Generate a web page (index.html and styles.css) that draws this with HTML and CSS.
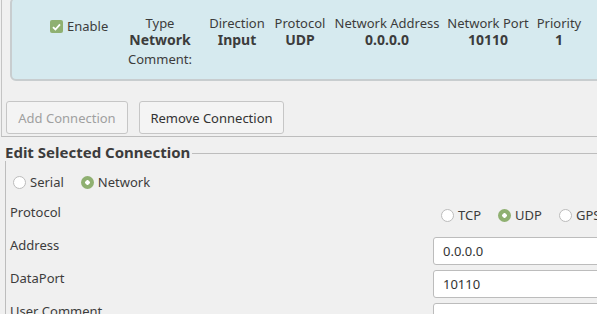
FILE: index.html
```html
<!DOCTYPE html>
<html lang="en">
<head>
    <meta charset="UTF-8">
    <title>Connections</title>
    <link rel="stylesheet" href="styles.css">
</head>
<body>

    <!-- Liste des connexions -->
    <div class="top">
        <div class="card">
            <label class="enable">
                <span class="check">
                    <svg width="9" height="8" viewBox="0 0 9 8"><path d="M1 4.2 L3.4 6.5 L8 1.3" fill="none" stroke="#fff" stroke-width="1.8"/></svg>
                </span>
                Enable
            </label>
            <div class="col col-type">
                <span>Type</span>
                <b>Network</b>
                <span class="comment">Comment:</span>
            </div>
            <div class="col col-dir"><span>Direction</span><b>Input</b></div>
            <div class="col col-proto"><span>Protocol</span><b>UDP</b></div>
            <div class="col col-addr"><span>Network Address</span><b>0.0.0.0</b></div>
            <div class="col col-port"><span>Network Port</span><b>10110</b></div>
            <div class="col col-prio"><span>Priority</span><b>1</b></div>
        </div>

        <div class="buttons">
            <button class="btn btn-add" disabled>Add Connection</button>
            <button class="btn btn-remove">Remove Connection</button>
        </div>
    </div>

    <!-- Edition de la connexion -->
    <div class="group">
        <div class="group-title">Edit Selected Connection</div>
        <div class="group-body">
            <div class="radios kind">
                <span class="radio-item"><span class="radio"></span>Serial</span>
                <span class="radio-item"><span class="radio on"></span>Network</span>
            </div>

            <div class="form">
                <div class="label">Protocol</div>
                <div class="field radios">
                    <span class="radio-item"><span class="radio"></span>TCP</span>
                    <span class="radio-item"><span class="radio on"></span>UDP</span>
                    <span class="radio-item"><span class="radio"></span>GPSD</span>
                </div>

                <div class="label">Address</div>
                <div class="field"><input class="input" type="text" value="0.0.0.0"></div>

                <div class="label">DataPort</div>
                <div class="field"><input class="input" type="text" value="10110"></div>

                <div class="label">User Comment</div>
                <div class="field"><input class="input" type="text" value=""></div>
            </div>
        </div>
    </div>

</body>
</html>
```

FILE: styles.css
```css
/* Fond et police */
body {
    font-family: 'Noto Sans', sans-serif;
    font-size: 13px;
    line-height: 17px;
    color: #3c3c3c;
    margin: 0;
    padding: 0;
    background-color: #f0f0f0;
    width: 597px;
    height: 314px;
    overflow: hidden;
}

/* Zone de la liste */
.top {
    margin-left: 1px;
    border-left: 1px solid #c4c4c4;
    border-bottom: 1px solid #bdbdbd;
    box-sizing: border-box;
    height: 140px;
}

.card {
    display: flex;
    margin: -3px 0 0 8px;
    width: 640px;
    height: 84px;
    box-sizing: border-box;
    background-color: #d6eaef;
    border: 2px solid #c8cdcf;
    border-radius: 6px;
    padding: 16px 0 0 38px;
}

.enable {
    display: flex;
    align-items: center;
    gap: 4px;
    width: 70px;
    height: 17px;
    margin-top: 3px;
}

.check {
    display: flex;
    align-items: center;
    justify-content: center;
    width: 13px;
    height: 13px;
    border-radius: 2px;
    background-color: #8fb071;
}

.col {
    display: flex;
    flex-direction: column;
    align-items: center;
    white-space: nowrap;
}

.col span {
    line-height: 16px;
}

.col b {
    font-weight: bold;
    font-size: 14px;
    line-height: 18px;
}

.col .comment {
    margin-top: 2px;
    line-height: 17px;
}

.col-type { width: 80px; }
.col-dir { width: 74px; }
.col-proto { width: 52px; }
.col-addr { width: 122px; }
.col-port { width: 80px; }
.col-prio { width: 62px; }

/* Boutons */
.buttons {
    display: flex;
    gap: 11px;
    margin: 20px 0 0 4px;
}

.btn {
    font-family: inherit;
    font-size: 13px;
    white-space: nowrap;
    height: 33px;
    padding: 0;
    background-color: #f4f4f4;
    border: 1px solid #c6c6c6;
    border-radius: 3px;
    color: #333;
}

.btn-add {
    width: 122px;
    color: #a0a0a0;
}

.btn-remove {
    width: 145px;
}

/* Groupe d'edition */
.group {
    margin: 7px 0 0 5px;
}

.group-title {
    display: flex;
    align-items: center;
    font-weight: bold;
    font-size: 15px;
}

.group-title::after {
    content: "";
    flex: 1;
    border-top: 1px solid #bdbdbd;
    margin: 1px 0 0 2px;
}

.group-body {
    border-left: 1px solid #bdbdbd;
    padding: 13px 0 0 4px;
}

.radios {
    display: flex;
    align-items: center;
}

.radio-item {
    display: flex;
    align-items: center;
    gap: 4px;
    margin-right: 17px;
}

.radio {
    width: 11px;
    height: 11px;
    border: 1px solid #bcbcbc;
    border-radius: 50%;
    background-color: #fff;
}

.radio.on {
    width: 13px;
    height: 13px;
    border: none;
    background: radial-gradient(circle, #fff 0 2px, #8fb071 2.5px);
}

.kind {
    margin-left: 3px;
    height: 17px;
}

/* Formulaire */
.form {
    display: grid;
    grid-template-columns: 423px 300px;
    grid-auto-rows: 28px;
    row-gap: 5px;
    margin-top: 13px;
}

.label {
    line-height: 17px;
}

.field.radios {
    padding-left: 8px;
    margin-top: 3px;
    height: 17px;
}

.input {
    font-family: inherit;
    font-size: 13px;
    color: #333;
    width: 100%;
    height: 28px;
    box-sizing: border-box;
    border: 1px solid #bcbcbc;
    border-radius: 3px;
    padding: 0 9px;
    background-color: #fff;
}
```
